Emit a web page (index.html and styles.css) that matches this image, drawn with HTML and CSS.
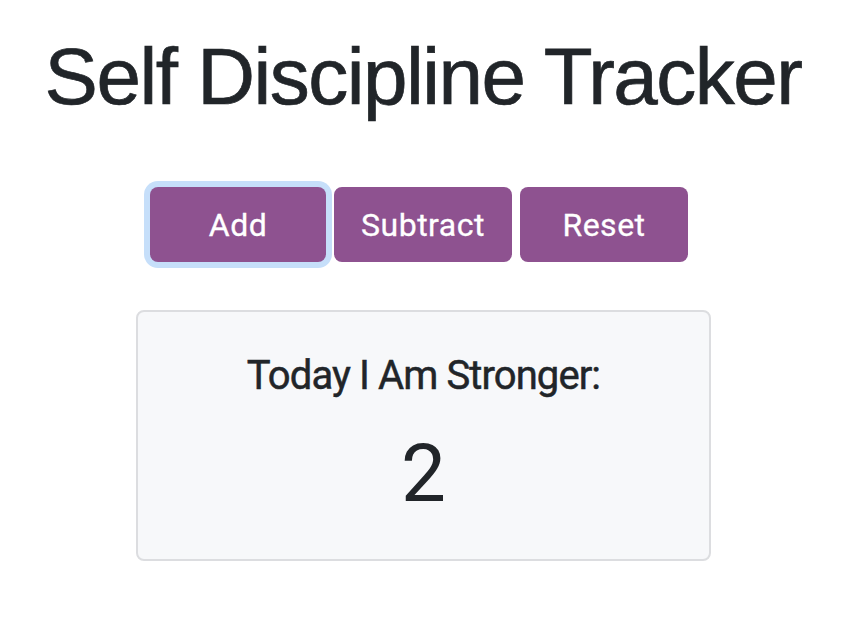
FILE: index.html
```html
<!DOCTYPE html>
<html lang="en">
<head>
<meta charset="utf-8">
<title>Self Discipline Tracker</title>
<link rel="stylesheet" href="styles.css">
</head>
<body>
<div class="page">
  <h1 class="title">Self Discipline Tracker</h1>
  <div class="actions">
    <button class="btn btn-focus btn-add">Add</button>
    <button class="btn btn-sub">Subtract</button>
    <button class="btn btn-reset">Reset</button>
  </div>
  <div class="card">
    <h5 class="card-title">Today I Am Stronger:</h5>
    <div class="count">2</div>
  </div>
</div>
</body>
</html>
```

FILE: styles.css
```css
html, body {
  margin: 0;
  padding: 0;
  background: #ffffff;
}

body {
  font-family: Roboto, "Liberation Sans", sans-serif;
  color: #212529;
}

.page {
  width: 846px;
  display: flex;
  flex-direction: column;
  align-items: center;
}

.title {
  margin: 0;
  padding-top: 29px;
  font-family: "Liberation Sans", Arial, sans-serif;
  font-weight: 400;
  font-size: 80px;
  line-height: 96px;
  letter-spacing: -1.5px;
  -webkit-text-stroke: 0.7px #212529;
  color: #212529;
}

.actions {
  display: flex;
  gap: 8px;
  margin-top: 62px;
  margin-right: 8px;
}

.btn {
  height: 75px;
  border: none;
  border-radius: 8px;
  background: #8e5290;
  color: #ffffff;
  font-family: Roboto, "Liberation Sans", sans-serif;
  font-size: 32px;
  font-weight: 400;
  letter-spacing: 0.5px;
  -webkit-text-stroke: 0.3px #ffffff;
  padding: 0;
  display: flex;
  align-items: center;
  justify-content: center;
}

.btn-add { width: 176px; }
.btn-sub { width: 178px; }
.btn-reset { width: 168px; }

.btn-focus {
  box-shadow: 0 0 0 6px #c6dffa;
}

.card {
  box-sizing: border-box;
  width: 575px;
  height: 251px;
  margin-top: 48px;
  margin-left: 1px;
  padding: 40px 20px 0;
  border: 2px solid #dcdde0;
  border-radius: 8px;
  background: #f7f8fa;
  display: flex;
  flex-direction: column;
  align-items: center;
}

.card-title {
  margin: 0;
  font-size: 40px;
  line-height: 48px;
  font-weight: 400;
  letter-spacing: -0.9px;
  -webkit-text-stroke: 0.5px #212529;
}

.count {
  margin-top: 26px;
  font-size: 80px;
  line-height: 96px;
  font-weight: 400;
}
```
